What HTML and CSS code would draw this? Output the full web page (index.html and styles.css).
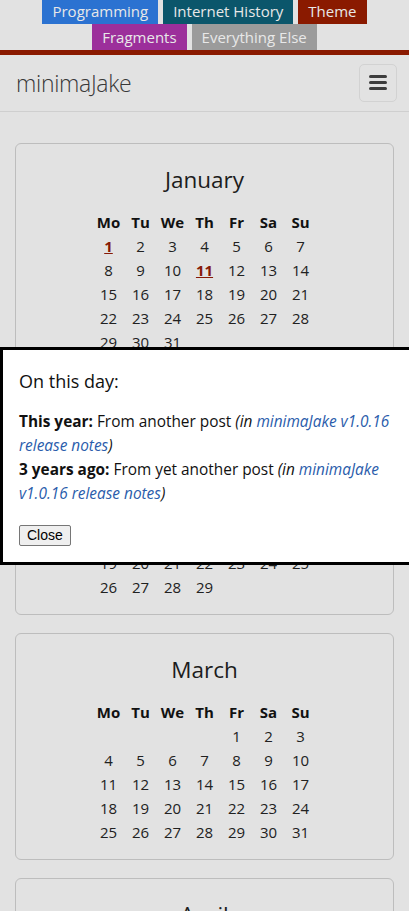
FILE: index.html
```html
<!DOCTYPE html>
<html lang="en">
<head>
<meta charset="utf-8">
<title>minimaJake</title>
<link rel="stylesheet" href="styles.css">
</head>
<body>
<nav class="tags">
  <a class="tag tag-prog">Programming</a>
  <a class="tag tag-hist">Internet History</a>
  <a class="tag tag-theme">Theme</a>
  <a class="tag tag-frag">Fragments</a>
  <a class="tag tag-else">Everything Else</a>
</nav>
<header class="navbar">
  <a class="brand">minimaJake</a>
  <button class="toggler" aria-label="Menu"><span class="bar"></span><span class="bar"></span><span class="bar"></span></button>
</header>
<main class="container">
  <section class="card">
    <h2 class="month">January</h2>
    <table class="cal">
      <tr><th>Mo</th><th>Tu</th><th>We</th><th>Th</th><th>Fr</th><th>Sa</th><th>Su</th></tr>
      <tr><td><a class="day-link">1</a></td><td>2</td><td>3</td><td>4</td><td>5</td><td>6</td><td>7</td></tr>
      <tr><td>8</td><td>9</td><td>10</td><td><a class="day-link">11</a></td><td>12</td><td>13</td><td>14</td></tr>
      <tr><td>15</td><td>16</td><td>17</td><td>18</td><td>19</td><td>20</td><td>21</td></tr>
      <tr><td>22</td><td>23</td><td>24</td><td>25</td><td>26</td><td>27</td><td>28</td></tr>
      <tr><td>29</td><td>30</td><td>31</td><td></td><td></td><td></td><td></td></tr>
    </table>
  </section>
  <section class="card">
    <h2 class="month">February</h2>
    <table class="cal">
      <tr><th>Mo</th><th>Tu</th><th>We</th><th>Th</th><th>Fr</th><th>Sa</th><th>Su</th></tr>
      <tr><td></td><td></td><td></td><td>1</td><td>2</td><td>3</td><td>4</td></tr>
      <tr><td>5</td><td>6</td><td>7</td><td>8</td><td>9</td><td>10</td><td>11</td></tr>
      <tr><td>12</td><td>13</td><td>14</td><td>15</td><td>16</td><td>17</td><td>18</td></tr>
      <tr><td>19</td><td>20</td><td>21</td><td>22</td><td>23</td><td>24</td><td>25</td></tr>
      <tr><td>26</td><td>27</td><td>28</td><td>29</td><td></td><td></td><td></td></tr>
    </table>
  </section>
  <section class="card">
    <h2 class="month">March</h2>
    <table class="cal">
      <tr><th>Mo</th><th>Tu</th><th>We</th><th>Th</th><th>Fr</th><th>Sa</th><th>Su</th></tr>
      <tr><td></td><td></td><td></td><td></td><td>1</td><td>2</td><td>3</td></tr>
      <tr><td>4</td><td>5</td><td>6</td><td>7</td><td>8</td><td>9</td><td>10</td></tr>
      <tr><td>11</td><td>12</td><td>13</td><td>14</td><td>15</td><td>16</td><td>17</td></tr>
      <tr><td>18</td><td>19</td><td>20</td><td>21</td><td>22</td><td>23</td><td>24</td></tr>
      <tr><td>25</td><td>26</td><td>27</td><td>28</td><td>29</td><td>30</td><td>31</td></tr>
    </table>
  </section>
  <section class="card">
    <h2 class="month">April</h2>
    <table class="cal">
      <tr><th>Mo</th><th>Tu</th><th>We</th><th>Th</th><th>Fr</th><th>Sa</th><th>Su</th></tr>
      <tr><td>1</td><td>2</td><td>3</td><td>4</td><td>5</td><td>6</td><td>7</td></tr>
      <tr><td>8</td><td>9</td><td>10</td><td>11</td><td>12</td><td>13</td><td>14</td></tr>
      <tr><td>15</td><td>16</td><td>17</td><td>18</td><td>19</td><td>20</td><td>21</td></tr>
      <tr><td>22</td><td>23</td><td>24</td><td>25</td><td>26</td><td>27</td><td>28</td></tr>
      <tr><td>29</td><td>30</td><td></td><td></td><td></td><td></td><td></td></tr>
    </table>
  </section>
</main>
<dialog class="otd" open>
  <p class="otd-title">On this day:</p>
  <p class="otd-body"><strong>This year:</strong> From another post <em>(in <a class="otd-link">minimaJake v1.0.16 release notes</a>)</em><br><strong>3 years ago:</strong> From yet another post <em>(in <a class="otd-link">minimaJake v1.0.16 release notes</a>)</em></p>
  <button class="otd-close">Close</button>
</dialog>
</body>
</html>
```

FILE: styles.css
```css
html, body {
  margin: 0;
  padding: 0;
}
body {
  background: #e2e2e2;
  font-family: "Open Sans", "Noto Sans", sans-serif;
  font-size: 15px;
  color: #212121;
}

.tags {
  display: flex;
  flex-wrap: wrap;
  justify-content: center;
  column-gap: 5px;
  margin-top: -2px;
}
.tag {
  display: block;
  height: 26px;
  line-height: 26px;
  padding: 0 10px;
  font-size: 15px;
  color: #e8e8e8;
  text-decoration: none;
}
.tag-prog { background: #2b72d1; }
.tag-hist { background: #0b566b; }
.tag-theme { background: #8a1a00; }
.tag-frag { background: #9c2f9b; }
.tag-else { background: #9b9b9b; }

.navbar {
  display: flex;
  align-items: center;
  justify-content: space-between;
  height: 56px;
  padding: 0 12px 0 16px;
  border-top: 5px solid #8a1a00;
  border-bottom: 1px solid #cfcfcf;
}
.brand {
  font-size: 23px;
  font-weight: 300;
  color: #383838;
  letter-spacing: -0.3px;
}
.toggler {
  width: 38px;
  height: 38px;
  padding: 0 0 2px;
  display: flex;
  flex-direction: column;
  align-items: center;
  justify-content: center;
  gap: 3px;
  background: transparent;
  border: 1px solid #d2d2d2;
  border-radius: 5px;
}
.bar {
  display: block;
  width: 18px;
  height: 3px;
  border-radius: 1.5px;
  background: #3d3d3d;
}

.container {
  padding: 31px 15px 0;
}
.card {
  border: 1px solid #bdbdbd;
  border-radius: 6px;
  padding: 20px 0 15px;
  margin-bottom: 18px;
}
.month {
  margin: 0 0 14px;
  font-size: 22.5px;
  font-weight: 400;
  line-height: 32px;
  text-align: center;
  color: #1c1c1c;
}
.cal {
  margin: 0 auto;
  border-collapse: collapse;
}
.cal th, .cal td {
  width: 32px;
  height: 24px;
  padding: 0;
  text-align: center;
  line-height: 24px;
  font-size: 15px;
}
.cal th {
  font-weight: 700;
  color: #111;
}
.day-link {
  color: #861a08;
  font-weight: 700;
  text-decoration: underline;
}

.otd {
  position: fixed;
  top: 347px;
  left: 0;
  margin: 0;
  width: 398px;
  padding: 16px;
  border: 3px solid #000;
  background: #fff;
  color: #111;
  font-family: "Open Sans", "Noto Sans", sans-serif;
  font-size: 15.4px;
}
.otd-title {
  margin: 0 0 14px;
  font-size: 18px;
  line-height: 30px;
}
.otd-body {
  margin: 0 0 19px;
  line-height: 24px;
}
.otd-link {
  color: #2a5cab;
  text-decoration: none;
}
.otd-close {
  display: block;
  font-family: "Liberation Sans", Arial, sans-serif;
  font-size: 14px;
  padding: 0 7px;
  height: 21px;
  line-height: 17px;
  background: #efefef;
  border: 1px solid #767676;
  border-radius: 2px;
  color: #000;
}
```
